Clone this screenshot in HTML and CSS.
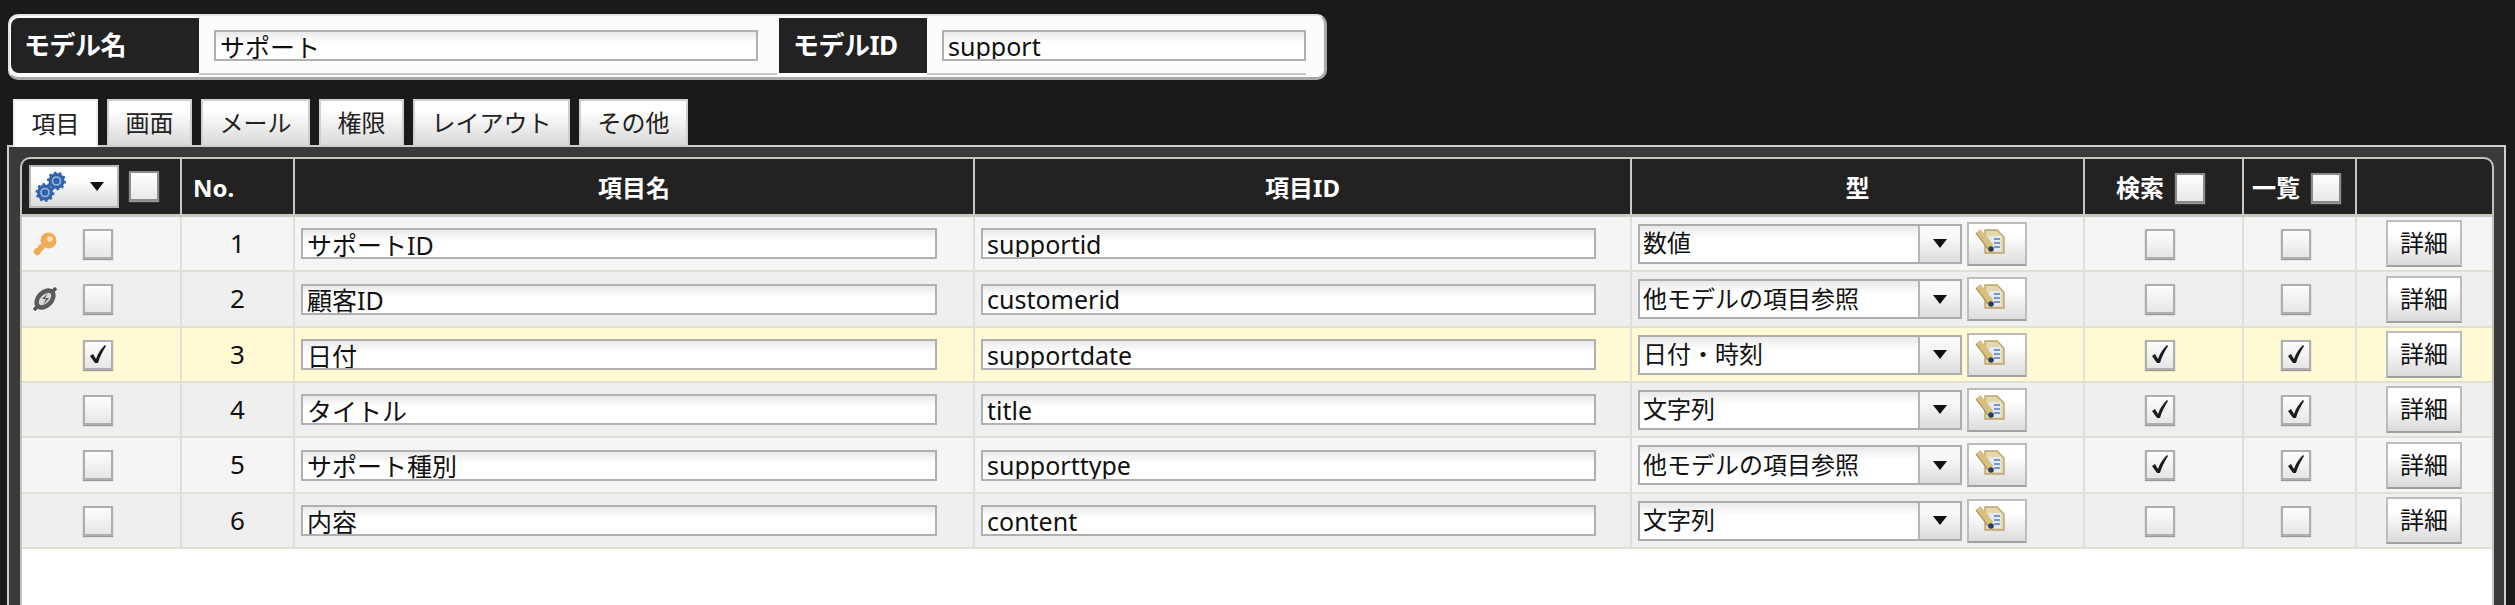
FILE: index.html
```html
<!DOCTYPE html>
<html lang="ja">
<head>
<meta charset="utf-8">
<title>モデル</title>
<link rel="stylesheet" href="styles.css">
</head>
<body>
<svg class="defs" width="0" height="0" aria-hidden="true">
  <defs>
    <symbol id="doc" viewBox="0 0 30 26">
      <path d="M10 2h12l7 7v16H10z" fill="#e6d7a8" stroke="#b8a470" stroke-width="1.4"/>
      <path d="M14 8h12v15H14z" fill="#e3e9f4"/>
      <path d="M19 11h6M19 15h6M19 19h6" stroke="#7a97c4" stroke-width="2"/>
      <path d="M3 3l13 16" stroke="#d9bf7e" stroke-width="6"/>
      <path d="M1 5l12 16" stroke="#a58d52" stroke-width="1.2"/>
      <circle cx="16" cy="21" r="2.8" fill="#2b3a55"/>
    </symbol>
    <symbol id="tick" viewBox="0 0 30 30">
      <path d="M7 16l3-2 3 5c2-6 5-10 9-14l1 1c-3 5-6 10-8 17h-3z" fill="#1c1c1c"/>
    </symbol>
  </defs>
</svg>

<header class="model">
  <div class="model-label model-label-first">モデル名</div>
  <div class="model-field model-field-name"><input class="text" value="サポート"></div>
  <div class="model-label model-label-id">モデルID</div>
  <div class="model-field model-field-id"><input class="text" value="support"></div>
</header>

<nav class="tabs">
  <a class="tab tab-active">項目</a>
  <a class="tab">画面</a>
  <a class="tab">メール</a>
  <a class="tab">権限</a>
  <a class="tab">レイアウト</a>
  <a class="tab">その他</a>
</nav>

<main class="panel">
  <div class="sheet">
    <table class="grid">
      <colgroup>
        <col class="c-tool"><col class="c-no"><col class="c-name"><col class="c-id"><col class="c-type"><col class="c-search"><col class="c-list"><col class="c-detail">
      </colgroup>
      <thead>
        <tr>
          <th class="th-tool">
            <div class="tool">
              <button class="menu">
                <svg class="gears" viewBox="0 0 32 32" width="32" height="32">
                  <circle cx="21.5" cy="10" r="8" fill="#3263ad" stroke="#3263ad" stroke-width="3" stroke-dasharray="2.4 2.6"/>
                  <circle cx="21.5" cy="10" r="4" fill="none" stroke="#9db7dc" stroke-width="1.6"/>
                  <circle cx="10" cy="21.5" r="8" fill="#3263ad" stroke="#3263ad" stroke-width="3" stroke-dasharray="2.4 2.6"/>
                  <circle cx="10" cy="21.5" r="4" fill="none" stroke="#9db7dc" stroke-width="1.6"/>
                </svg>
                <i class="arrow"></i>
              </button>
              <span class="check check-head"></span>
            </div>
          </th>
          <th class="th-no">No.</th>
          <th>項目名</th>
          <th>項目ID</th>
          <th>型</th>
          <th><div class="th-check"><span>検索</span><span class="check check-head"></span></div></th>
          <th><div class="th-check"><span>一覧</span><span class="check check-head"></span></div></th>
          <th></th>
        </tr>
      </thead>
      <tbody>
        <tr class="odd">
          <td><div class="tool-row"><span class="slot"><svg viewBox="0 0 24 24" width="24" height="24"><path d="M10 14L2 22" stroke="#eeac58" stroke-width="5.4"/><path d="M2 17l5 5M6 13l4 4" stroke="#eeac58" stroke-width="3"/><circle cx="15.5" cy="8.5" r="8" fill="#eeac58"/><circle cx="17" cy="7" r="2.8" fill="#f9e2bd"/></svg></span><span class="check"></span></div></td>
          <td class="num">1</td>
          <td><input class="text text-name" value="サポートID"></td>
          <td><input class="text text-id" value="supportid"></td>
          <td><div class="type"><div class="select"><span class="select-value">数値</span><span class="select-arrow"><i class="arrow"></i></span></div><button class="doc"><svg width="30" height="26"><use href="#doc"/></svg></button></div></td>
          <td class="cell-search"><span class="check"></span></td>
          <td class="cell-list"><span class="check"></span></td>
          <td class="cell-detail"><button class="detail">詳細</button></td>
        </tr>
        <tr class="even">
          <td><div class="tool-row"><span class="slot"><svg viewBox="0 0 24 24" width="24" height="24"><path d="M1 23l5-5M23 1l-5 5" stroke="#4e4e4e" stroke-width="3.4"/><ellipse cx="12" cy="12" rx="10" ry="6.5" transform="rotate(-45 12 12)" fill="#d8d8d8" stroke="#5a5a5a" stroke-width="4.4"/><path d="M15 6l-6 6h4l-3 6 6-7h-4z" fill="#5a5a5a"/></svg></span><span class="check"></span></div></td>
          <td class="num">2</td>
          <td><input class="text text-name" value="顧客ID"></td>
          <td><input class="text text-id" value="customerid"></td>
          <td><div class="type"><div class="select"><span class="select-value">他モデルの項目参照</span><span class="select-arrow"><i class="arrow"></i></span></div><button class="doc"><svg width="30" height="26"><use href="#doc"/></svg></button></div></td>
          <td class="cell-search"><span class="check"></span></td>
          <td class="cell-list"><span class="check"></span></td>
          <td class="cell-detail"><button class="detail">詳細</button></td>
        </tr>
        <tr class="hot">
          <td><div class="tool-row"><span class="slot"></span><span class="check"><svg width="30" height="30"><use href="#tick"/></svg></span></div></td>
          <td class="num">3</td>
          <td><input class="text text-name" value="日付"></td>
          <td><input class="text text-id" value="supportdate"></td>
          <td><div class="type"><div class="select"><span class="select-value">日付・時刻</span><span class="select-arrow"><i class="arrow"></i></span></div><button class="doc"><svg width="30" height="26"><use href="#doc"/></svg></button></div></td>
          <td class="cell-search"><span class="check"><svg width="30" height="30"><use href="#tick"/></svg></span></td>
          <td class="cell-list"><span class="check"><svg width="30" height="30"><use href="#tick"/></svg></span></td>
          <td class="cell-detail"><button class="detail">詳細</button></td>
        </tr>
        <tr class="even">
          <td><div class="tool-row"><span class="slot"></span><span class="check"></span></div></td>
          <td class="num">4</td>
          <td><input class="text text-name" value="タイトル"></td>
          <td><input class="text text-id" value="title"></td>
          <td><div class="type"><div class="select"><span class="select-value">文字列</span><span class="select-arrow"><i class="arrow"></i></span></div><button class="doc"><svg width="30" height="26"><use href="#doc"/></svg></button></div></td>
          <td class="cell-search"><span class="check"><svg width="30" height="30"><use href="#tick"/></svg></span></td>
          <td class="cell-list"><span class="check"><svg width="30" height="30"><use href="#tick"/></svg></span></td>
          <td class="cell-detail"><button class="detail">詳細</button></td>
        </tr>
        <tr class="odd">
          <td><div class="tool-row"><span class="slot"></span><span class="check"></span></div></td>
          <td class="num">5</td>
          <td><input class="text text-name" value="サポート種別"></td>
          <td><input class="text text-id" value="supporttype"></td>
          <td><div class="type"><div class="select"><span class="select-value">他モデルの項目参照</span><span class="select-arrow"><i class="arrow"></i></span></div><button class="doc"><svg width="30" height="26"><use href="#doc"/></svg></button></div></td>
          <td class="cell-search"><span class="check"><svg width="30" height="30"><use href="#tick"/></svg></span></td>
          <td class="cell-list"><span class="check"><svg width="30" height="30"><use href="#tick"/></svg></span></td>
          <td class="cell-detail"><button class="detail">詳細</button></td>
        </tr>
        <tr class="even">
          <td><div class="tool-row"><span class="slot"></span><span class="check"></span></div></td>
          <td class="num">6</td>
          <td><input class="text text-name" value="内容"></td>
          <td><input class="text text-id" value="content"></td>
          <td><div class="type"><div class="select"><span class="select-value">文字列</span><span class="select-arrow"><i class="arrow"></i></span></div><button class="doc"><svg width="30" height="26"><use href="#doc"/></svg></button></div></td>
          <td class="cell-search"><span class="check"></span></td>
          <td class="cell-list"><span class="check"></span></td>
          <td class="cell-detail"><button class="detail">詳細</button></td>
        </tr>
      </tbody>
    </table>
  </div>
</main>
</body>
</html>
```

FILE: styles.css
```css
* { box-sizing: border-box; }

html, body {
  margin: 0;
  height: 605px;
  overflow: hidden;
}

body {
  background: #1a1a1a;
  color: #111;
  font-family: "Noto Sans", "Noto Sans CJK JP", sans-serif;
  font-size: 24px;
  line-height: 1.2;
  display: flex;
  flex-direction: column;
}

.defs { position: absolute; }

/* Model header */
.model {
  display: flex;
  align-self: flex-start;
  width: 1319px;
  height: 66px;
  margin: 14px 0 0 8px;
  padding: 2px 0 0 1px;
  background: #fcfcfc;
  border: 2px solid #e4e4e4;
  border-right: 3px solid #a8a8a8;
  border-bottom: 3px solid #a8a8a8;
  border-radius: 10px;
}

.model-label {
  flex: none;
  height: 55px;
  display: flex;
  align-items: center;
  background: #222;
  color: #fff;
  font-size: 26px;
  font-weight: 700;
  letter-spacing: -0.5px;
}

.model-label-first {
  width: 188px;
  padding-left: 13px;
  border-radius: 8px 0 0 8px;
}

.model-label-id {
  width: 148px;
  padding-left: 14px;
}

.model-field {
  flex: none;
  height: 57px;
  padding: 12px 0 0 15px;
  border-bottom: 2px solid #c8c8c8;
}

.model-field-name { width: 578px; margin-right: 2px; }
.model-field-name .text { width: 544px; }
.model-field-id { width: 379px; margin-left: 0; }
.model-field-id .text { width: 364px; }

.text {
  display: block;
  height: 31px;
  margin: 0;
  padding: 0 4px;
  border: 2px solid #b0b0b0;
  border-radius: 0;
  background: linear-gradient(#e9e9e9, #fff 40%);
  color: #111;
  font: inherit;
  font-size: 25px;
  outline: none;
}

/* Tabs */
.tabs {
  display: flex;
  gap: 9px;
  height: 46px;
  margin: 19px 0 0 13px;
  flex: none;
}

.tab {
  height: 46px;
  padding: 0 16.5px;
  display: flex;
  align-items: center;
  background: linear-gradient(#fff 20%, #d9d9d9);
  border: 2px solid #cfcfcf;
  border-bottom: 0;
  color: #222;
}

.tab-active {
  position: relative;
  z-index: 1;
  height: 48px;
  background: #fff;
  border-color: #eee;
}

/* Panel */
.panel {
  flex: 1;
  width: 2499px;
  margin-left: 7px;
  padding: 10px 10px 0 11px;
  background: #3a3a3a;
  border: 2px solid #cfcfc8;
  border-bottom: 0;
}

.sheet {
  height: 100%;
  background: #fff;
  border: 2px solid #c4c4ba;
  border-bottom: 0;
  border-radius: 10px 10px 0 0;
  overflow: hidden;
}

.grid {
  width: 2470px;
  border-collapse: separate;
  border-spacing: 0;
  table-layout: fixed;
}

.c-tool { width: 160px; }
.c-no { width: 113px; }
.c-name { width: 680px; }
.c-id { width: 657px; }
.c-type { width: 453px; }
.c-search { width: 159px; }
.c-list { width: 113px; }
.c-detail { width: 135px; }

th {
  height: 58px;
  padding: 3px 0 0;
  background: #222;
  color: #fff;
  font-weight: 700;
  text-align: center;
  border-right: 2px solid #c9c9bf;
  border-bottom: 3px solid #c9c9bf;
}

th:last-child, td:last-child { border-right: 0; }

.th-no { text-align: left; padding-left: 11px; }

.th-tool { padding: 0; vertical-align: top; }

.tool {
  display: flex;
  align-items: flex-start;
  gap: 10px;
  padding: 6px 0 0 7px;
  height: 54px;
}

.tool .check { margin-top: 6px; }

.menu {
  width: 90px;
  height: 43px;
  padding: 0 13px 0 4px;
  display: flex;
  align-items: center;
  justify-content: space-between;
  background: linear-gradient(#fff 30%, #dcdcdc);
  border: 2px solid #b8b8b8;
  border-radius: 0;
}

.arrow {
  width: 0;
  height: 0;
  border-style: solid;
  border-width: 9px 7px 0;
  border-color: #111 transparent transparent;
}

.th-check {
  display: flex;
  align-items: center;
  justify-content: flex-start;
  gap: 11px;
  padding-left: 31px;
}

th:nth-child(7) .th-check { padding-left: 8px; gap: 11px; }

tbody tr { height: 55px; }
tbody tr:nth-child(3n+2) { height: 56px; }

td {
  padding: 0;
  vertical-align: middle;
  border-right: 2px solid #e0e0d6;
  border-bottom: 2px solid #e0e0d6;
}

.odd td { background: #f5f5f5; }
.even td { background: #efefef; }
.hot td { background: #fffad4; }

.tool-row {
  display: flex;
  align-items: center;
  padding-left: 11px;
  gap: 26px;
}

.slot {
  width: 24px;
  height: 24px;
  flex: none;
  display: block;
}

.slot svg { display: block; }

.check {
  flex: none;
  display: block;
  width: 30px;
  height: 30px;
  background: linear-gradient(#fdfdfd, #e6e6e6);
  border: 2px solid #aeaeae;
  box-shadow: 0 1px 1px #999;
  position: relative;
}

.check svg {
  position: absolute;
  left: -2px;
  top: -2px;
}

.check-head {
  border-color: #8c8c8c;
  background: linear-gradient(#fff, #e8e8e8);
}

.num { text-align: center; font-size: 26px; }

.text-name { width: 636px; margin-left: 6px; }
.text-id { width: 615px; margin-left: 6px; }

.type {
  display: flex;
  align-items: center;
  gap: 5px;
  padding-left: 6px;
}

.select {
  width: 324px;
  height: 40px;
  display: flex;
  border: 2px solid #adadad;
  background: linear-gradient(#e9e9e9, #fff 35%);
}

.select-value {
  flex: 1;
  padding-left: 3px;
  display: flex;
  align-items: center;
}

.select-arrow {
  width: 42px;
  display: flex;
  align-items: center;
  justify-content: center;
  border-left: 2px solid #b5b5b5;
  background: linear-gradient(#f8f8f8 30%, #dcdcdc);
}

.doc {
  width: 60px;
  height: 44px;
  padding: 0 0 6px 6px;
  display: flex;
  align-items: center;
  background: linear-gradient(#fff 30%, #dcdcdc);
  border: 2px solid #bdbdbd;
  border-bottom-color: #a0a0a0;
  border-radius: 0;
}

.cell-search { padding-left: 60px; }
.cell-list { padding-left: 37px; }
.cell-detail { padding-left: 29px; }

.detail {
  display: block;
  width: 76px;
  height: 47px;
  padding: 0;
  background: linear-gradient(#fff 30%, #dadada);
  border: 2px solid #bdbdbd;
  border-bottom-color: #9f9f9f;
  border-radius: 0;
  color: #111;
  font: inherit;
}
```
